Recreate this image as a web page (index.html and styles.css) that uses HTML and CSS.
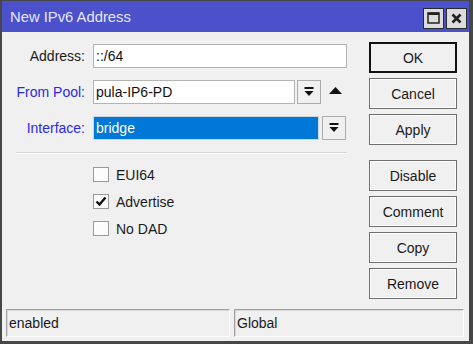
FILE: index.html
```html
<!DOCTYPE html>
<html lang="en">
<head>
  <meta charset="UTF-8" />
  <title>New IPv6 Address</title>
  <link rel="stylesheet" href="styles.css">
</head>
<body>
  <div class="window">
    <div class="titlebar">
      <span class="title">New IPv6 Address</span>
      <div class="title-btns">
        <span class="tbtn">
          <svg width="13" height="12" viewBox="0 0 13 12"><rect x="1" y="1" width="11" height="10" fill="none" stroke="#222" stroke-width="1.5"/><rect x="1" y="0.5" width="11" height="2.5" fill="#222"/></svg>
        </span>
        <span class="tbtn">
          <svg width="11" height="11" viewBox="0 0 11 11"><path d="M1.5 1.5 L9.5 9.5 M9.5 1.5 L1.5 9.5" stroke="#222" stroke-width="2.6"/></svg>
        </span>
      </div>
    </div>

    <div class="main">
      <div class="form">
        <div class="grid">
          <label class="lbl">Address:</label>
          <div class="field"><input class="txt w-addr" value="::/64"></div>

          <label class="lbl blue">From Pool:</label>
          <div class="field">
            <input class="txt w-pool" value="pula-IP6-PD">
            <span class="dd"><svg width="10" height="10" viewBox="0 0 10 10"><rect x="0.5" y="0" width="9" height="2" fill="#111"/><polygon points="0.5,4 9.5,4 5,9" fill="#111"/></svg></span>
            <span class="up"><svg width="13" height="7" viewBox="0 0 13 7"><polygon points="0,7 13,7 6.5,0" fill="#111"/></svg></span>
          </div>

          <label class="lbl blue">Interface:</label>
          <div class="field">
            <input class="txt w-iface sel" value="bridge">
            <span class="dd dd-iface"><svg width="10" height="10" viewBox="0 0 10 10"><rect x="0.5" y="0" width="9" height="2" fill="#111"/><polygon points="0.5,4 9.5,4 5,9" fill="#111"/></svg></span>
          </div>
        </div>

        <div class="sep"></div>

        <div class="checks">
          <div class="check"><span class="box"></span>EUI64</div>
          <div class="check"><span class="box"><svg width="12" height="11" viewBox="0 0 12 11"><path d="M1.5 5.5 L4.5 8.5 L10.5 1.5" fill="none" stroke="#111" stroke-width="2.4"/></svg></span>Advertise</div>
          <div class="check"><span class="box"></span>No DAD</div>
        </div>
      </div>

      <div class="buttons">
        <button class="btn default">OK</button>
        <button class="btn">Cancel</button>
        <button class="btn">Apply</button>
        <button class="btn group">Disable</button>
        <button class="btn">Comment</button>
        <button class="btn">Copy</button>
        <button class="btn">Remove</button>
      </div>
    </div>

    <div class="statusbar">
      <div class="panel left">enabled</div>
      <div class="panel right">Global</div>
    </div>
  </div>
</body>
</html>
```

FILE: styles.css
```css
:root {
  --frame: #474747;
  --title-blue: #4b50cb;
  --face: #f0f0f0;
  --label-blue: #2a2ae0;
}
body {
  margin: 0;
  font-family: "Liberation Sans", Arial, sans-serif;
  font-size: 14px;
  color: #1a1a1a;
}
.window {
  width: 473px;
  height: 344px;
  box-sizing: border-box;
  border-style: solid;
  border-color: var(--frame);
  border-width: 1px 4px 3px 2px;
  background: var(--face);
  display: flex;
  flex-direction: column;
}
.titlebar {
  height: 31px;
  background: var(--title-blue);
  display: flex;
  align-items: center;
  justify-content: space-between;
  padding: 0 2px 0 8px;
}
.title {
  color: #e6e8ff;
  font-size: 14.8px;
  margin-top: 1px;
}
.title-btns {
  display: flex;
  gap: 2px;
  margin-top: 3px;
}
.tbtn {
  width: 19px;
  height: 19px;
  border: 1px solid #2a2a2a;
  background: #dcdcdc;
  display: flex;
  align-items: center;
  justify-content: center;
}
.main {
  flex: 1;
  display: flex;
}
.form {
  width: 345px;
  padding-top: 12px;
}
.grid {
  display: grid;
  grid-template-columns: 83px 1fr;
  column-gap: 8px;
  row-gap: 12px;
}
.lbl {
  text-align: right;
  line-height: 24px;
}
.blue {
  color: var(--label-blue);
}
.field {
  display: flex;
  align-items: center;
  height: 24px;
}
.txt {
  box-sizing: border-box;
  height: 24px;
  border: 1px solid #b4b4b4;
  background: #fff;
  font-family: inherit;
  font-size: 14px;
  color: #111;
  padding: 0 2px;
  outline: none;
}
.w-addr { width: 254px; }
.w-pool { width: 202px; }
.w-iface { width: 226px; }
.sel {
  background: #0078d7;
  color: #fff;
  border-color: #cfd6de;
}
.dd {
  box-sizing: border-box;
  width: 24px;
  height: 24px;
  margin-left: 2px;
  border: 1px solid #acacac;
  background: var(--face);
  display: flex;
  align-items: center;
  justify-content: center;
}
.dd-iface {
  margin-left: 3px;
}
.up {
  display: flex;
  margin-left: 8px;
  margin-top: -4px;
}
.sep {
  margin: 12px 0 0 14px;
  height: 1px;
  background: #d4d4d4;
  border-bottom: 1px solid #fbfbfb;
}
.checks {
  margin: 7px 0 0 91px;
}
.check {
  height: 27px;
  display: flex;
  align-items: center;
  gap: 7px;
}
.box {
  box-sizing: border-box;
  width: 16px;
  height: 15px;
  border: 1px solid #999;
  background: #fcfcfc;
  display: flex;
  align-items: center;
  justify-content: center;
}
.buttons {
  margin-left: 22px;
  padding-top: 10px;
  width: 88px;
  display: flex;
  flex-direction: column;
  gap: 5px;
}
.btn {
  box-sizing: border-box;
  height: 31px;
  border: 1px solid #6f6f6f;
  box-shadow: inset 0 0 0 1px #fdfdfd;
  background: #f0f0f0;
  font-family: inherit;
  font-size: 14px;
  color: #1a1a1a;
  padding: 0;
}
.default {
  border: 2px solid #111;
  box-shadow: none;
}
.group {
  margin-top: 10px;
}
.statusbar {
  display: flex;
  gap: 4px;
  padding: 0 5px 4px 4px;
}
.panel {
  box-sizing: border-box;
  height: 28px;
  line-height: 26px;
  padding-left: 2px;
  border: 1px solid;
  border-color: #a0a0a0 #fdfdfd #fdfdfd #a0a0a0;
  box-shadow: inset 1px 1px 0 #d8d8d8;
}
.left { width: 224px; }
.right { flex: 1; }
```
